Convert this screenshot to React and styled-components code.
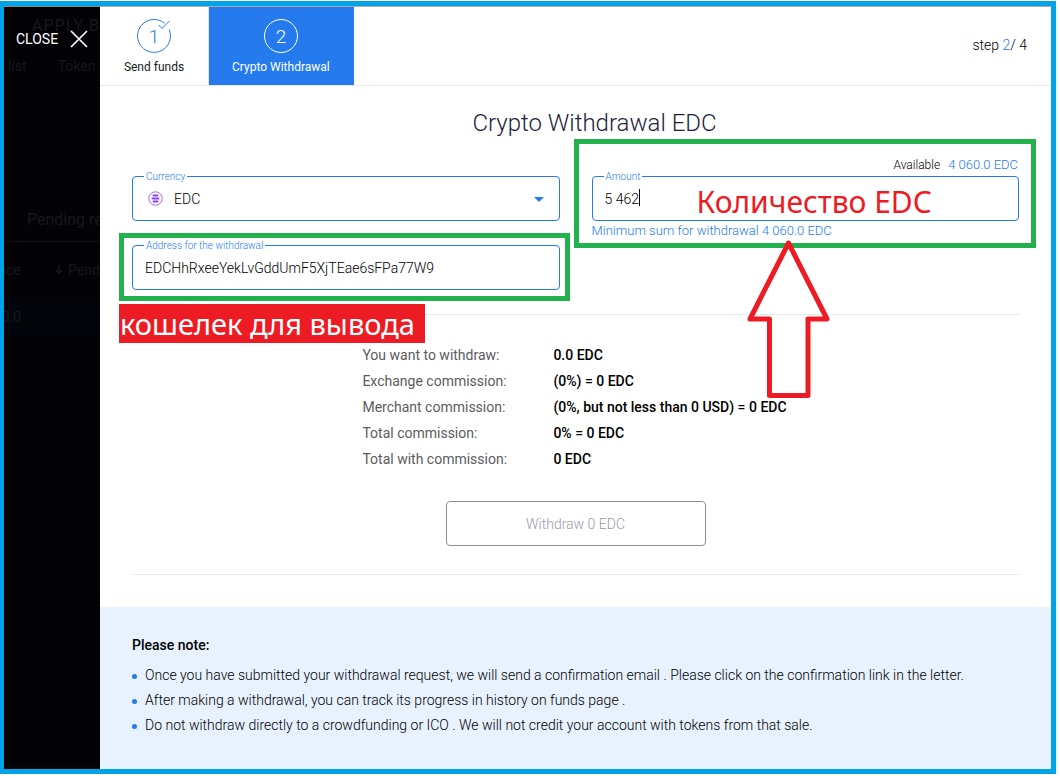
import { useState } from "react";
import styled, { createGlobalStyle } from "styled-components";

const GlobalStyle = createGlobalStyle`
*{
box-sizing:border-box;
}
body{
margin:0;
background:#fff;
color:#000;
font-family:Roboto,"Liberation Sans",sans-serif;
font-size:14px;
line-height:20px;
font-weight:300;
}
input,select,button{
font:inherit;
color:inherit;
}
`;

const Page = styled.div`
display:flex;
min-height:100vh;
padding:1px 2px 4px 0;
`;

const Frame = styled.div`
flex:1;
display:flex;
border:5px solid #00a2e8;
border-left-width:4px;
`;

const Scrollbar = styled.div`
width:2px;
margin-top:5px;
background:#f3f1f1;
`;

const Side = styled.aside`
position:relative;
flex:none;
width:96px;
overflow:hidden;
background:#020207;
border-top:1px solid #8a8a8a;
`;

/* dimmed funds page that stays visible behind the modal */
const Backdrop = styled.div`
position:absolute;
inset:0;
color:#17181b;
white-space:nowrap;
font-weight:400;
`;

const BackTitle = styled.div`
padding:9px 0 0 28px;
font-size:16px;
letter-spacing:1px;
`;

const BackTabs = styled.div`
display:flex;
gap:31px;
padding:20px 0 0 4px;
`;

const BackHeading = styled.div`
padding:134px 0 11px 23px;
font-size:16px;
border-bottom:1px solid #101114;
`;

const BackRow = styled.div`
display:flex;
align-items:center;
height:${p => p.$tall ? "39px" : "55px"};
background:${p => p.$tall ? "#03050a" : "transparent"};
svg{
flex:none;
margin-right:5px;
}
`;

const BackCell = styled.div`
display:flex;
flex:none;
justify-content:flex-end;
width:17px;
margin-right:34px;
`;

const Close = styled.button`
position:relative;
display:flex;
align-items:center;
gap:12px;
margin-top:22px;
padding:0 0 0 12px;
border:0;
background:none;
color:#fff;
font-weight:400;
cursor:pointer;
`;

const Panel = styled.main`
flex:1;
display:flex;
flex-direction:column;
min-width:0;
border-top:1px solid #a9adb3;
`;

const Header = styled.header`
display:flex;
align-items:stretch;
height:79px;
border-bottom:1px solid #e8e9eb;
`;

const Step = styled.div`
display:flex;
flex-direction:column;
align-items:center;
gap:3px;
min-width:109px;
padding:11px 23px 0;
border-right:1px solid ${p => p.$active ? "#257bee" : "#e4e5e7"};
background:${p => p.$active ? "#257bee" : "#fff"};
color:${p => p.$active ? "#fff" : "#1b1b1b"};
font-size:12px;
font-weight:400;
`;

const StepIcon = styled.svg`
width:36px;
height:36px;
overflow:visible;
fill:none;
stroke:${p => p.$active ? "#fff" : "#257bee"};
text{
fill:${p => p.$active ? "#fff" : "#257bee"};
stroke:none;
font-size:19px;
font-weight:300;
text-anchor:middle;
}
`;

const Progress = styled.div`
margin-left:auto;
padding:28px 24px 0 0;
b{
color:#257bee;
font-weight:300;
}
`;

const Title = styled.h1`
margin:0;
padding:21px 0 0 38px;
text-align:center;
color:#1e1e3c;
font-size:24px;
line-height:32px;
font-weight:300;
`;

const Form = styled.form`
display:flex;
flex-direction:column;
padding:0 32px;
`;

const Fields = styled.div`
display:grid;
grid-template-columns:1fr 1fr;
gap:32px;
padding:16px 0 24px;
`;

const Column = styled.div`
display:flex;
flex-direction:column;
gap:17px;
padding-top:${p => p.$pad || "0"};
`;

const Holder = styled.div`
position:relative;
`;

const Fieldset = styled.fieldset`
min-width:0;
height:52px;
margin:0;
padding:0;
border:1px solid #257bee;
border-radius:4px;
legend{
margin-left:11px;
padding:2px 2px 0;
color:#257bee;
font-size:10px;
line-height:12px;
}
`;

const Control = styled.div`
display:flex;
align-items:center;
height:32px;
padding:0 15px 0 12px;
gap:7px;
svg{
flex:none;
}
`;

const Input = styled.input`
flex:1;
min-width:0;
height:20px;
padding:0;
border:0;
outline:0;
background:none;
`;

const Select = styled.select`
flex:1;
height:20px;
padding:0;
border:0;
outline:0;
appearance:none;
background:none;
`;

const Available = styled.div`
display:flex;
justify-content:flex-end;
gap:8px;
height:14px;
padding-right:1px;
font-size:12px;
line-height:20px;
font-weight:300;
span{
color:#257bee;
font-size:13px;
}
`;

const Hint = styled.div`
color:#257bee;
font-size:13px;
line-height:20px;
`;

const Cursor = styled.i`
position:absolute;
left:47px;
top:20px;
width:1px;
height:17px;
background:#000;
`;

/* annotations painted over the form */
const Marker = styled.div`
position:absolute;
inset:${p => p.$inset};
border:5px solid #22b14c;
pointer-events:none;
`;

const RedNote = styled.div`
position:absolute;
left:105px;
top:15px;
color:#ed1c24;
font-family:"Noto Sans","Open Sans",sans-serif;
font-size:30px;
line-height:36px;
font-weight:400;
white-space:nowrap;
`;

const RedLabel = styled.div`
position:absolute;
left:-13px;
top:66px;
z-index:1;
padding:0 10px 0 1px;
background:#ed1c24;
color:#fff;
font-family:"Noto Sans","Open Sans",sans-serif;
font-size:29px;
line-height:39px;
font-weight:400;
white-space:nowrap;
`;

const Arrow = styled.svg`
position:absolute;
left:154px;
top:71px;
width:84px;
height:160px;
fill:none;
stroke:#ed1c24;
stroke-width:5;
stroke-linejoin:round;
`;

const Divider = styled.hr`
width:100%;
height:1px;
margin:0;
border:0;
background:#e8e9eb;
`;

const Summary = styled.table`
align-self:center;
margin:27px 0 29px;
border-collapse:collapse;
line-height:26px;
th{
width:191px;
padding:0;
text-align:left;
font-weight:400;
color:#5c5c5c;
}
td{
padding:0 2px 0 0;
font-weight:500;
}
`;

const Submit = styled.button`
align-self:center;
width:260px;
height:45px;
margin-bottom:28px;
border:1px solid #8d8d9e;
border-radius:4px;
background:#fff;
color:#9a9aab;
`;

const Notes = styled.section`
flex:1;
margin-top:32px;
padding:28px 32px 24px;
background:#e8f2ff;
h2{
margin:0 0 8px;
font-size:14px;
line-height:20px;
font-weight:500;
}
ul{
margin:0;
padding:0;
list-style:none;
}
li{
display:flex;
align-items:center;
gap:8px;
line-height:25px;
}
li::before{
content:"";
width:5px;
height:5px;
margin-top:2px;
border-radius:50%;
background:#257bee;
}
`;

const rows = [
    ["You want to withdraw:", "0.0 EDC"],
    ["Exchange commission:", "(0%) = 0 EDC"],
    ["Merchant commission:", "(0%, but not less than 0 USD) = 0 EDC"],
    ["Total commission:", "0% = 0 EDC"],
    ["Total with commission:", "0 EDC"],
];

const notes = [
    "Once you have submitted your withdrawal request, we will send a confirmation email . Please click on the confirmation link in the letter.",
    "After making a withdrawal, you can track its progress in history on funds page .",
    "Do not withdraw directly to a crowdfunding or ICO . We will not credit your account with tokens from that sale.",
];

function Coin(){
    return (
        <svg width="22" height="16" viewBox="0 0 22 16" fill="none">
            <circle cx="10.5" cy="7.5" r="6.7" stroke="#8a3ffc" strokeWidth=".8" />
            <path d="M8.500 4.500h4M7.500 7.500h6M8.500 10.500h4" stroke="#8a3ffc" strokeWidth="2" strokeLinecap="round" />
        </svg>
    )
}

function StepItem({number,label,active,done}){
    return (
        <Step $active={active}>
            <StepIcon $active={active} viewBox="0 0 36 36">
                {done
                    ? <path d="M28.5 5.2A16.5 16.5 0 1 0 33.2 11.5M22.5 7l3.5 3.5L33.5 3" />
                    : <circle cx="18" cy="18" r="16.5" />}
                <text x="18" y="25">{number}</text>
            </StepIcon>
            {label}
        </Step>
    )
}

export default function App(){
    const [address,setAddress]=useState("EDCHhRxeeYekLvGddUmF5XjTEae6sFPa77W9");
    const [amount,setAmount]=useState("5 462");
    return (
        <Page>
            <GlobalStyle />
            <Frame>
                <Side>
                    <Backdrop aria-hidden="true">
                        <BackTitle>APPLY BONUS</BackTitle>
                        <BackTabs><span>list</span><span>Token sale</span></BackTabs>
                        <BackHeading>Pending requests</BackHeading>
                        <BackRow>
                            <BackCell>Balance</BackCell>
                            <svg width="8" height="9" viewBox="0 0 8 9" fill="none" stroke="#17181b" strokeWidth="1.5">
                                <path d="M4 0v8M1 5l3 3 3-3" />
                            </svg>
                            Pending
                        </BackRow>
                        <BackRow $tall><BackCell>0.0</BackCell></BackRow>
                    </Backdrop>
                    <Close type="button">
                        CLOSE
                        <svg width="18" height="18" viewBox="0 0 18 18" stroke="#fff" strokeWidth="1.7">
                            <path d="M1 1l16 16M17 1L1 17" />
                        </svg>
                    </Close>
                </Side>
                <Panel>
                    <Header>
                        <StepItem number="1" label="Send funds" done />
                        <StepItem number="2" label="Crypto Withdrawal" active />
                        <Progress>step <b>2</b>/ 4</Progress>
                    </Header>
                    <Title>Crypto Withdrawal EDC</Title>
                    <Form onSubmit={e=>e.preventDefault()}>
                        <Fields>
                            <Column $pad="14px">
                                <Fieldset>
                                    <legend><label htmlFor="currency">Currency</label></legend>
                                    <Control>
                                        <Coin />
                                        <Select id="currency" defaultValue="EDC">
                                            <option>EDC</option>
                                        </Select>
                                        <svg width="10" height="5" viewBox="0 0 10 5" fill="#257bee"><path d="M0 0h10L5 5z" /></svg>
                                    </Control>
                                </Fieldset>
                                <Holder>
                                    <Fieldset>
                                        <legend><label htmlFor="address">Address for the withdrawal</label></legend>
                                        <Control>
                                            <Input id="address" value={address} onChange={e=>setAddress(e.target.value)} />
                                        </Control>
                                    </Fieldset>
                                    <Marker $inset="-5px -10px -11px -13px" />
                                    <RedLabel>кошелек для вывода</RedLabel>
                                </Holder>
                            </Column>
                            <Column>
                                <div>
                                    <Available>Available <span>4 060.0 EDC</span></Available>
                                    <Holder>
                                        <Fieldset>
                                            <legend><label htmlFor="amount">Amount</label></legend>
                                            <Control>
                                                <Input id="amount" value={amount} onChange={e=>setAmount(e.target.value)} />
                                            </Control>
                                        </Fieldset>
                                        <Cursor />
                                        <RedNote>Количество EDC</RedNote>
                                        <Marker $inset="-30px -17px -27px -18px" />
                                        <Arrow viewBox="0 0 84 160">
                                            <path d="M42.5 3L81 79H62V155.5H23.5V79H4z" />
                                        </Arrow>
                                    </Holder>
                                    <Hint>Minimum sum for withdrawal 4 060.0 EDC</Hint>
                                </div>
                            </Column>
                        </Fields>
                        <Divider />
                        <Summary>
                            <tbody>
                                {rows.map(([name,value])=>(
                                    <tr key={name}><th scope="row">{name}</th><td>{value}</td></tr>
                                ))}
                            </tbody>
                        </Summary>
                        <Submit type="submit">Withdraw 0 EDC</Submit>
                        <Divider />
                    </Form>
                    <Notes>
                        <h2>Please note:</h2>
                        <ul>
                            {notes.map(text=><li key={text}>{text}</li>)}
                        </ul>
                    </Notes>
                </Panel>
            </Frame>
            <Scrollbar />
        </Page>
    )
}
